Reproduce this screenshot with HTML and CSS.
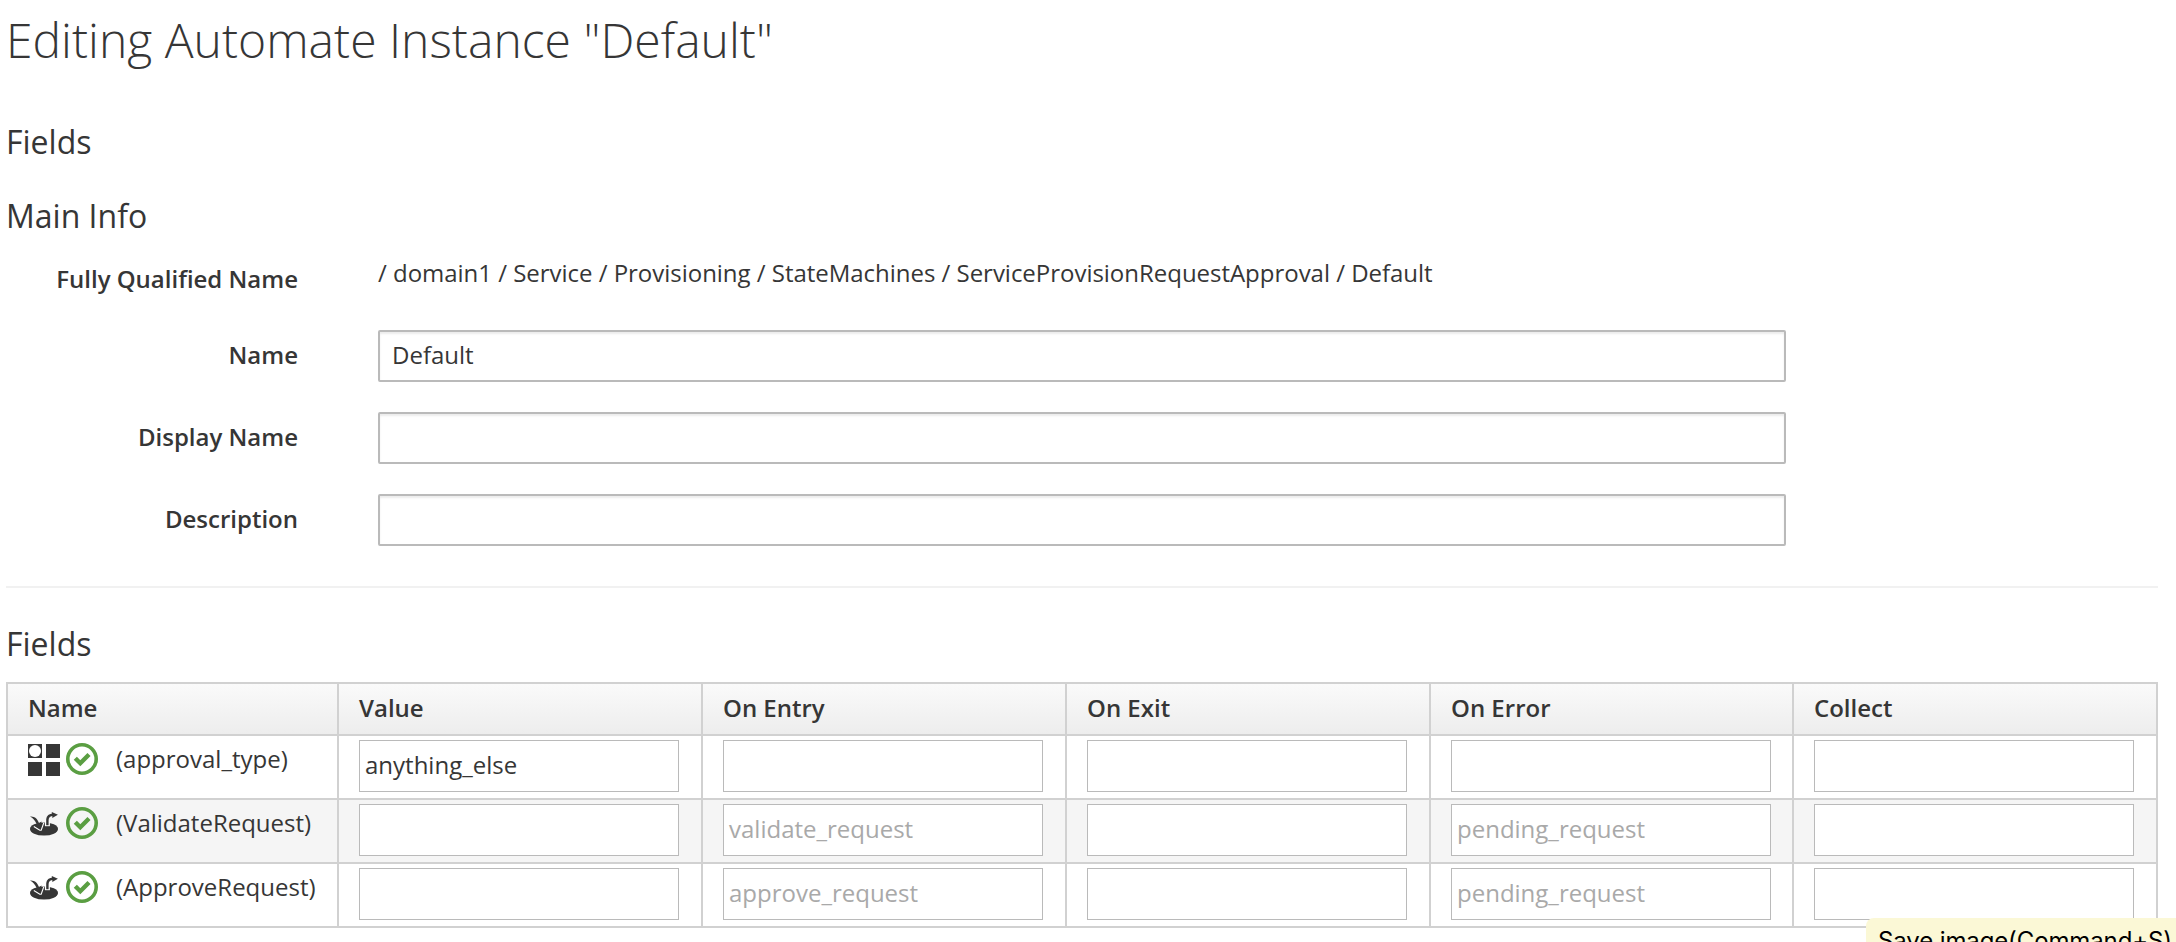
FILE: index.html
```html
<!DOCTYPE html>
<html lang="en">
<head>
<meta charset="utf-8">
<title>Editing Automate Instance</title>
<link rel="stylesheet" href="styles.css">
</head>
<body>
<svg class="defs" width="0" height="0">
  <symbol id="check" viewBox="0 0 32 32">
    <circle cx="16" cy="16" r="14.2" fill="none" stroke="#5a9e42" stroke-width="3.6"/>
    <path d="M9.3 15.200l5 5 8.700-8.700" fill="none" stroke="#5a9e42" stroke-width="4.4"/>
  </symbol>
  <symbol id="attribute" viewBox="0 0 32 32">
    <path d="M0 0h14v14H0zM18 0h14v14H18zM0 18h14v14H0zM18 18h14v14H18z" fill="#363636"/>
    <circle cx="7" cy="7" r="6" fill="#fff"/>
  </symbol>
  <symbol id="state" viewBox="0 0 32 32">
    <ellipse cx="16" cy="21" rx="14" ry="6.600" fill="#363636"/>
    <path d="M2 8.600c4.500-.6 7.500 2.400 9 6.400l2.600-1.400-1 7.600-6.600-3.800 2.600-1.300C7 12.500 5 10 2 8.600z" fill="#363636"/>
    <path class="halo" d="M5.800 18.500l6 3.700h1.400l2.600-7.500" fill="none" stroke-width="1.100"/>
    <path class="halo-fill" d="M16.900 12h5v6.200h-5z"/>
    <path d="M18.200 17.200v-4.500c0-4 1.600-6.400 5.600-6.900V4l6.100 2.700-5.600 3.400V7.900c-2.700.3-3.700 1.800-3.700 4.800v4.500z" fill="#363636"/>
  </symbol>
</svg>
<main class="page">
  <h1 class="title">Editing Automate Instance "Default"</h1>
  <h3 class="heading">Fields</h3>
  <h3 class="heading heading-main">Main Info</h3>
  <section class="form">
    <div class="row row-static"><span class="label">Fully Qualified Name</span><span class="path">/ domain1 / Service / Provisioning / StateMachines / ServiceProvisionRequestApproval / Default</span></div>
    <div class="row"><span class="label">Name</span><div class="control">Default</div></div>
    <div class="row"><span class="label">Display Name</span><div class="control"></div></div>
    <div class="row"><span class="label">Description</span><div class="control"></div></div>
  </section>
  <hr class="rule">
  <h3 class="heading heading-table">Fields</h3>
  <section class="table">
    <div class="tr head"><div class="td">Name</div><div class="td">Value</div><div class="td">On Entry</div><div class="td">On Exit</div><div class="td">On Error</div><div class="td">Collect</div></div>
    <div class="tr">
      <div class="td name"><svg class="icon"><use href="#attribute"/></svg><svg class="icon check"><use href="#check"/></svg><span>(approval_type)</span></div>
      <div class="td"><div class="cell filled">anything_else</div></div><div class="td"><div class="cell"></div></div><div class="td"><div class="cell"></div></div><div class="td"><div class="cell"></div></div><div class="td"><div class="cell"></div></div>
    </div>
    <div class="tr odd">
      <div class="td name"><svg class="icon"><use href="#state"/></svg><svg class="icon check"><use href="#check"/></svg><span>(ValidateRequest)</span></div>
      <div class="td"><div class="cell"></div></div><div class="td"><div class="cell">validate_request</div></div><div class="td"><div class="cell"></div></div><div class="td"><div class="cell">pending_request</div></div><div class="td"><div class="cell"></div></div>
    </div>
    <div class="tr">
      <div class="td name"><svg class="icon"><use href="#state"/></svg><svg class="icon check"><use href="#check"/></svg><span>(ApproveRequest)</span></div>
      <div class="td"><div class="cell"></div></div><div class="td"><div class="cell">approve_request</div></div><div class="td"><div class="cell"></div></div><div class="td"><div class="cell">pending_request</div></div><div class="td"><div class="cell"></div></div>
    </div>
  </section>
  <div class="tooltip">Save image(Command+S)</div>
</main>
</body>
</html>
```
FILE: styles.css
```css
* { box-sizing: border-box; }
body { margin: 0; background: #fff; color: #363636; font: 24px/34px "Open Sans", sans-serif; }
.defs { position: absolute; }
.page { position: relative; width: 2176px; height: 942px; overflow: hidden; padding: 8px 18px 0 6px; }
.title { margin: 0; font-size: 48px; line-height: 64px; font-weight: 300; letter-spacing: .02px; }
.heading { margin: 50px 0 0; font-size: 32px; line-height: 40px; font-weight: 400; }
.heading-main { margin-top: 34px; }
.form { display: flex; flex-direction: column; gap: 30px; padding-top: 20px; }
.row { display: grid; grid-template-columns: 292px 1408px; column-gap: 80px; height: 52px; }
.row-static { height: 44px; }
.label { text-align: right; font-weight: 600; padding-top: 8px; white-space: nowrap; }
.row-static .label { padding-top: 6px; }
.path { white-space: nowrap; letter-spacing: -.025px; }
.control { border: 2px solid #bababa; border-radius: 2px; padding: 6px 12px; box-shadow: inset 0 2px 2px rgba(3, 3, 3, .08); white-space: nowrap; }
.rule { margin: 40px 0 0; border: 0; height: 2px; background: #f1f1f1; }
.heading-table { margin-top: 36px; }
.table { margin-top: 18px; border: 2px solid #d1d1d1; width: 2152px; }
.tr { display: grid; grid-template-columns: 331px 364px 364px 364px 363px 362px; height: 64px; border-bottom: 2px solid #d1d1d1; }
.tr:last-child { height: 62px; border-bottom: 0; }
.td { border-right: 2px solid #d1d1d1; padding: 4px 20px 0; white-space: nowrap; }
.td:last-child { border-right: 0; }
.head { height: 52px; font-weight: 600; background: linear-gradient(#fafafa, #ededed); }
.head .td { padding-top: 7px; }
.odd { background: #f5f5f5; }
.name { display: flex; align-items: flex-start; padding-top: 7px; }
.name span { margin-left: 18px; line-height: 34px; margin-top: -1px; }
.icon { width: 32px; height: 32px; margin-top: 1px; flex: none; }
.icon.check { margin: 0 0 0 6px; }
.halo { stroke: #fff; }
.halo-fill { fill: #fff; }
.odd .halo-fill { fill: #f5f5f5; }
.cell { width: 320px; height: 52px; border: 1px solid #bababa; background: #fff; color: #a9a9a9; padding: 7px 5px; }
.filled { color: #363636; }
.tooltip { position: absolute; left: 1866px; top: 918px; width: 320px; height: 40px; padding: 8px 12px; border-radius: 8px; background: #fbf8d6; color: #000; font: 24px/30px Inter, sans-serif; letter-spacing: -.12px; white-space: nowrap; }
```
